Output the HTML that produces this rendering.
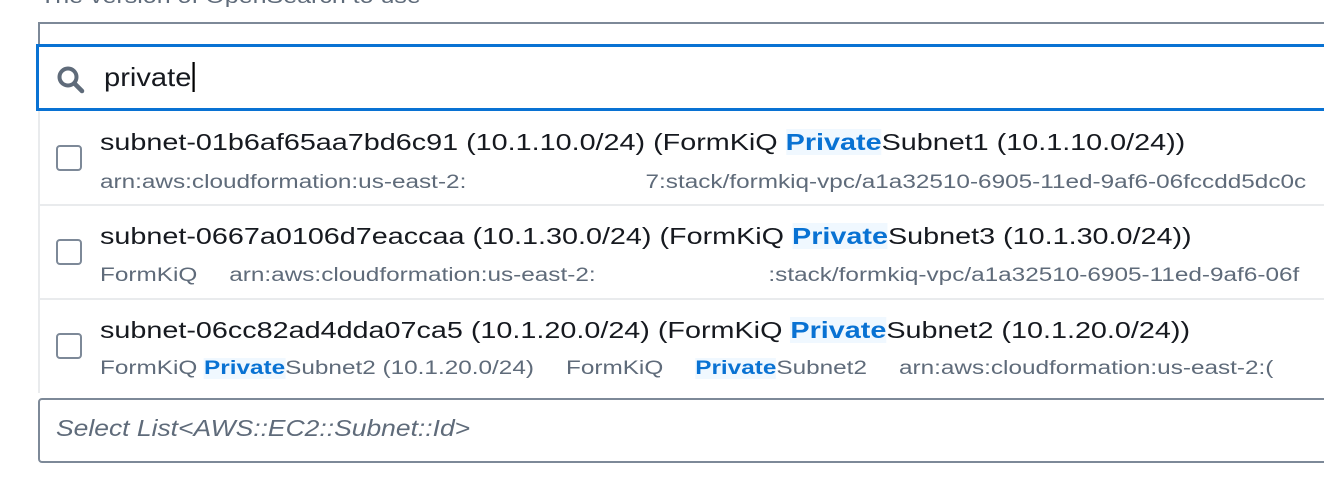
<!DOCTYPE html><html><head><style>
body{margin:0;width:1324px;height:486px;background:#fff;overflow:hidden;font-family:"Liberation Sans",sans-serif;position:relative}
.a{position:absolute;white-space:nowrap}
.cb{position:absolute;left:56px;width:26px;height:26px;border:2px solid #7d8998;border-radius:4px;box-sizing:border-box}
.t{position:absolute;left:100px;font-size:23px;color:#16191f;white-space:nowrap;transform:scaleX(1.25);transform-origin:0 0}
.s{position:absolute;left:100px;font-size:19px;color:#5f6b7a;white-space:nowrap;transform:scaleX(1.28);transform-origin:0 0}
.h{color:#0972d3;font-weight:bold;background:#f0f8ff}
.sep{position:absolute;left:39px;right:0;height:2px;background:#e9ebed}
</style></head><body>
<div class="a" style="left:40px;top:-14px;font-size:20px;color:#5f6b7a;transform:scaleX(1.25);transform-origin:0 0">The version of OpenSearch to use</div>
<div class="a" style="left:38px;top:22px;right:-4px;height:2px;background:#7d8998"></div>
<div class="a" style="left:38px;top:22px;width:2px;height:24px;background:#7d8998"></div>
<div class="a" style="left:36px;top:44px;right:-4px;height:61px;border:3px solid #0972d3"></div>
<svg class="a" style="left:55px;top:64px" width="32" height="32" viewBox="0 0 32 32"><circle cx="13" cy="13" r="8.5" fill="none" stroke="#5f6b7a" stroke-width="4"/><path d="M19.5 19.5 L27 27" stroke="#5f6b7a" stroke-width="4.5" stroke-linecap="round"/></svg>
<div class="a" style="left:104px;top:62px;font-size:26px;color:#16191f;transform:scaleX(1.12);transform-origin:0 0">private<span style="border-left:2px solid #000;margin-left:1px"></span></div>
<div class="a" style="left:38px;top:111px;width:2px;height:282px;background:#e9ebed"></div>
<div class="cb" style="top:145px"></div>
<div class="t" style="top:129px">subnet-01b6af65aa7bd6c91 (10.1.10.0/24) (FormKiQ <span class="h">Private</span>Subnet1 (10.1.10.0/24))</div>
<div class="s" style="top:172px">arn:aws:cloudformation:us-east-2:<span style="display:inline-block;width:140px"></span>7:stack/formkiq-vpc/a1a32510-6905-11ed-9af6-06fccdd5dc0c</div>
<div class="sep" style="top:204px"></div>
<div class="cb" style="top:239px"></div>
<div class="t" style="top:223px">subnet-0667a0106d7eaccaa (10.1.30.0/24) (FormKiQ <span class="h">Private</span>Subnet3 (10.1.30.0/24))</div>
<div class="s" style="top:265px">FormKiQ<span style="display:inline-block;width:25px"></span>arn:aws:cloudformation:us-east-2:<span style="display:inline-block;width:135px"></span>:stack/formkiq-vpc/a1a32510-6905-11ed-9af6-06f</div>
<div class="sep" style="top:298px"></div>
<div class="cb" style="top:333px"></div>
<div class="t" style="top:317px">subnet-06cc82ad4dda07ca5 (10.1.20.0/24) (FormKiQ <span class="h">Private</span>Subnet2 (10.1.20.0/24))</div>
<div class="s" style="top:358px">FormKiQ <span class="h">Private</span>Subnet2 (10.1.20.0/24)<span style="display:inline-block;width:25px"></span>FormKiQ<span style="display:inline-block;width:25px"></span><span class="h">Private</span>Subnet2<span style="display:inline-block;width:25px"></span>arn:aws:cloudformation:us-east-2:(</div>
<div class="a" style="left:38px;top:398px;right:-6px;height:61px;border:2px solid #7d8998;border-radius:4px"></div>
<div class="a" style="left:56px;top:415px;font-size:23px;font-style:italic;color:#5f6b7a;transform:scaleX(1.15);transform-origin:0 0">Select List&lt;AWS::EC2::Subnet::Id&gt;</div>
</body></html>
